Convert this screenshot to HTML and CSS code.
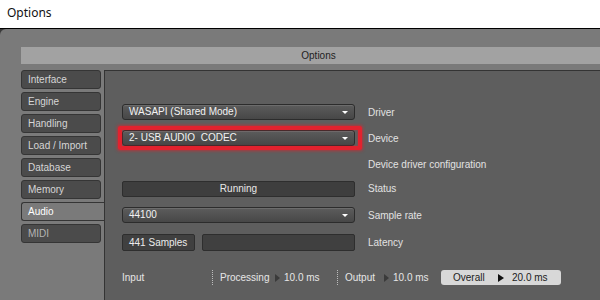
FILE: index.html
```html
<!DOCTYPE html>
<html lang="en">
<head>
<meta charset="UTF-8">
<title>Options</title>
<link rel="stylesheet" href="styles.css">
</head>
<body>

<div class="titlebar">Options</div>

<div class="frame">
    <div class="header">Options</div>
    <div class="body">
        <ul class="tabs">
            <li>Interface</li>
            <li>Engine</li>
            <li>Handling</li>
            <li>Load / Import</li>
            <li>Database</li>
            <li>Memory</li>
            <li class="active">Audio</li>
            <li class="dim">MIDI</li>
        </ul>
        <div class="panel">
            <div class="row r1">
                <div class="select">WASAPI (Shared Mode)<span class="arrow"></span></div>
                <span class="label">Driver</span>
            </div>
            <div class="row r2">
                <div class="select">2- USB AUDIO&nbsp; CODEC<span class="arrow"></span><span class="mark"></span></div>
                <span class="label">Device</span>
            </div>
            <div class="row r3">
                <div></div>
                <span class="label">Device driver configuration</span>
            </div>
            <div class="row r4">
                <div class="status">Running</div>
                <span class="label">Status</span>
            </div>
            <div class="row r5">
                <div class="select">44100<span class="arrow"></span></div>
                <span class="label">Sample rate</span>
            </div>
            <div class="row r6">
                <div class="latency">
                    <div class="field small">441 Samples</div>
                    <div class="field wide"></div>
                </div>
                <span class="label">Latency</span>
            </div>
            <div class="meters">
                <div class="seg input">Input</div>
                <div class="seg proc"><span class="name">Processing</span><span class="play"></span>10.0 ms</div>
                <div class="seg out"><span class="name">Output</span><span class="play"></span>10.0 ms</div>
                <div class="overall"><span class="name">Overall</span><span class="play"></span>20.0 ms</div>
            </div>
        </div>
    </div>
</div>

</body>
</html>
```

FILE: styles.css
```css
* {
    box-sizing: border-box;
}

body {
    margin: 0;
    height: 300px;
    overflow: hidden;
    background-color: #3a3a3a;
    font-family: "Liberation Sans", Arial, sans-serif;
}

.titlebar {
    height: 29px;
    line-height: 26px;
    padding-left: 7px;
    background-color: #ffffff;
    border-bottom: 1px solid #000000;
    color: #111111;
    font-family: "Noto Sans", sans-serif;
    font-size: 12px;
}

.frame {
    height: 271px;
    padding-top: 18px;
    background-color: #7a7a7a;
    border-top-left-radius: 6px;
    overflow: hidden;
    font-size: 10px;
}

.header {
    width: 595px;
    height: 17px;
    margin-left: 21px;
    line-height: 17px;
    background-color: #a2a2a2;
    color: #1e1e1e;
    text-align: center;
}

.body {
    display: flex;
    margin-top: 6px;
    height: 230px;
}

/* left tabs */
.tabs {
    list-style-type: none;
    margin: 0 0 0 21px;
    padding: 0;
    width: 83px;
    display: flex;
    flex-direction: column;
    gap: 3px;
}

.tabs li {
    width: 80px;
    height: 19px;
    line-height: 17px;
    padding-left: 6px;
    background-color: #4b4b4b;
    border: 1px solid #353535;
    border-radius: 3px;
    color: #d6d6d6;
}

.tabs li.active {
    width: 83px;
    background-color: #7a7a7a;
    border-right: none;
    border-radius: 3px 0 0 3px;
    color: #ffffff;
}

.tabs li.dim {
    color: #b4b4b4;
}

/* right panel */
.panel {
    flex: 1;
    padding: 29px 0 0 17px;
    background-color: #5e5e5e;
    border-top: 1px solid #343434;
    border-left: 1px solid #343434;
    color: #e6e6e6;
}

.row {
    display: grid;
    grid-template-columns: 233px auto;
    column-gap: 13px;
    align-items: center;
}

.r1 { height: 24px; }
.r2 { height: 28px; }
.r3 { height: 25px; }
.r4 { height: 23px; }
.r5 { height: 30px; }
.r6 { height: 24px; }

.label {
    color: #e2e2e2;
}

.select {
    position: relative;
    height: 16px;
    line-height: 14px;
    padding-left: 6px;
    background: linear-gradient(#5c5c5c, #474747);
    border: 1px solid #2c2c2c;
    border-radius: 3px;
    box-shadow: inset 0 1px 0 #6c6c6c;
    color: #f2f2f2;
}

.arrow {
    position: absolute;
    right: 6px;
    top: 6px;
    border-top: 3px solid #ffffff;
    border-left: 3px solid transparent;
    border-right: 3px solid transparent;
}

/* red highlight drawn over the device box */
.mark {
    position: absolute;
    top: -5px;
    left: -5px;
    right: -8px;
    bottom: -5px;
    border: 4px solid #e2222e;
    border-radius: 2px;
    box-shadow: 0 0 3px 1px rgba(230, 30, 40, 0.6), inset 0 0 2px rgba(230, 30, 40, 0.6);
}

.status {
    height: 16px;
    line-height: 14px;
    text-align: center;
    background-color: #3e3e3e;
    border: 1px solid #2e2e2e;
    border-radius: 2px;
    color: #e8e8e8;
}

.latency {
    display: flex;
    gap: 7px;
}

.field {
    height: 17px;
    line-height: 15px;
    padding-left: 6px;
    background-color: #404040;
    border: 1px solid #2e2e2e;
    border-radius: 2px;
    color: #ececec;
}

.field.small {
    width: 73px;
}

.field.wide {
    flex: 1;
}

/* bottom meters */
.meters {
    display: flex;
    align-items: center;
    margin-top: 16px;
    height: 15px;
}

.seg {
    display: flex;
    align-items: center;
    height: 15px;
}

.seg.input {
    width: 90px;
}

.seg.proc {
    width: 125px;
    padding-left: 7px;
    border-left: 1px dotted #bdbdbd;
}

.seg.proc .name {
    width: 55px;
}

.seg.out {
    width: 104px;
    padding-left: 7px;
    border-left: 1px dotted #bdbdbd;
}

.seg.out .name {
    width: 39px;
}

.play {
    display: inline-block;
    width: 0;
    height: 0;
    margin-right: 5px;
    border-left: 5px solid #3a3a3a;
    border-top: 4px solid transparent;
    border-bottom: 4px solid transparent;
}

.seg .play {
    margin-right: 4px;
    margin-left: 0;
}

.overall {
    display: flex;
    align-items: center;
    width: 120px;
    height: 15px;
    padding-left: 12px;
    background-color: #d8d8d8;
    border-radius: 3px;
    color: #1c1c1c;
}

.overall .name {
    width: 45px;
}

.overall .play {
    border-left-color: #111111;
    border-left-width: 6px;
    margin-right: 8px;
}
```
